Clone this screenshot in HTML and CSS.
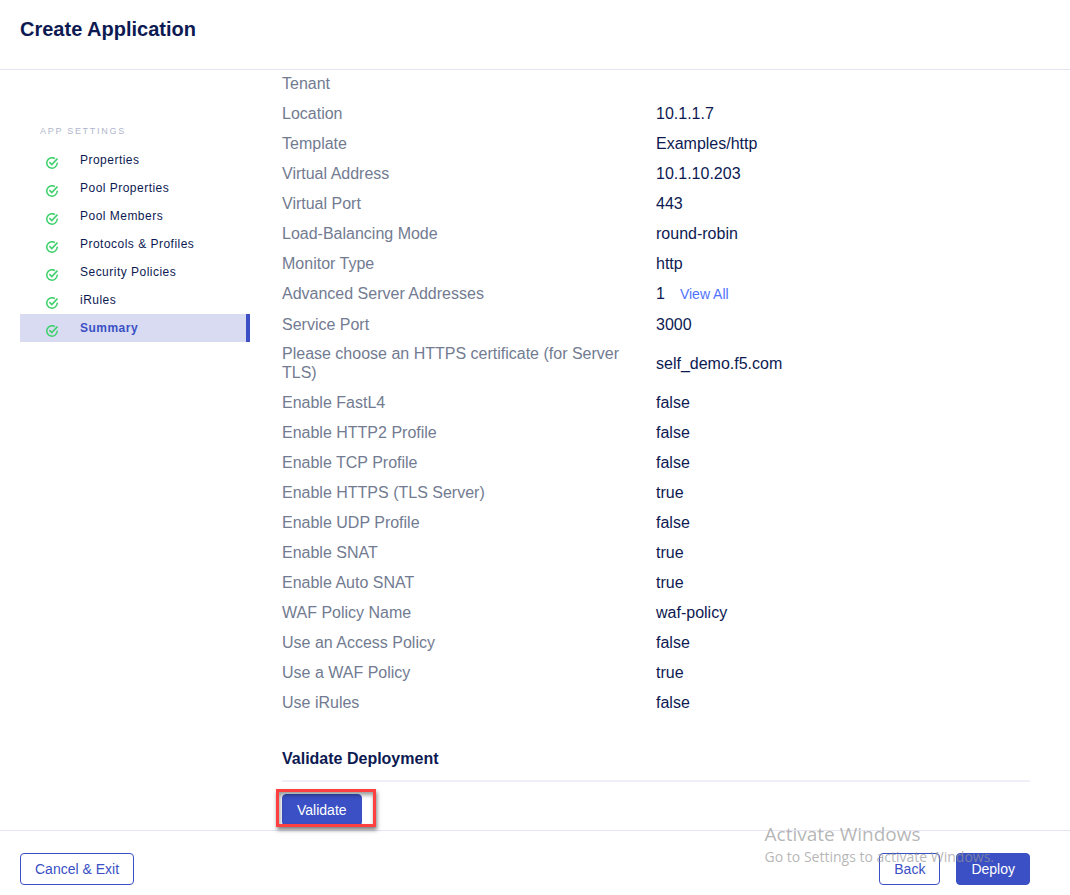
FILE: index.html
```html
<!DOCTYPE html>
<html lang="en">
<head>
<meta charset="utf-8">
<title>Create Application</title>
<link rel="stylesheet" href="styles.css">
</head>
<body>
<svg class="symbols" aria-hidden="true">
  <symbol id="check" viewBox="0 0 12 12">
    <path d="M11.2 5.6A5.2 5.2 0 1 1 8.9 1.6" fill="none" stroke="#3fd06c" stroke-width="1.5"/>
    <path d="M3.4 5.1L5.8 7.5L11.5 1.5" fill="none" stroke="#3fd06c" stroke-width="1.6"/>
  </symbol>
</svg>
<header class="header"><h1 class="title">Create Application</h1></header>
<div class="body">
  <nav class="sidebar" aria-label="App settings">
    <h2 class="nav-title">APP SETTINGS</h2>
    <a class="step" href="#"><svg class="check"><use href="#check"/></svg>Properties</a>
    <a class="step" href="#"><svg class="check"><use href="#check"/></svg>Pool Properties</a>
    <a class="step" href="#"><svg class="check"><use href="#check"/></svg>Pool Members</a>
    <a class="step" href="#"><svg class="check"><use href="#check"/></svg>Protocols &amp; Profiles</a>
    <a class="step" href="#"><svg class="check"><use href="#check"/></svg>Security Policies</a>
    <a class="step" href="#"><svg class="check"><use href="#check"/></svg>iRules</a>
    <a class="step active" href="#" aria-current="step"><svg class="check"><use href="#check"/></svg>Summary</a>
  </nav>
  <main class="content">
    <table class="summary">
      <tr><th scope="row">Tenant</th><td></td></tr>
      <tr><th scope="row">Location</th><td>10.1.1.7</td></tr>
      <tr><th scope="row">Template</th><td>Examples/http</td></tr>
      <tr><th scope="row">Virtual Address</th><td>10.1.10.203</td></tr>
      <tr><th scope="row">Virtual Port</th><td>443</td></tr>
      <tr><th scope="row">Load-Balancing Mode</th><td>round-robin</td></tr>
      <tr><th scope="row">Monitor Type</th><td>http</td></tr>
      <tr class="with-link"><th scope="row">Advanced Server Addresses</th><td>1<a class="view-all" href="#">View All</a></td></tr>
      <tr><th scope="row">Service Port</th><td>3000</td></tr>
      <tr><th scope="row">Please choose an HTTPS certificate (for Server TLS)</th><td>self_demo.f5.com</td></tr>
      <tr><th scope="row">Enable FastL4</th><td>false</td></tr>
      <tr><th scope="row">Enable HTTP2 Profile</th><td>false</td></tr>
      <tr><th scope="row">Enable TCP Profile</th><td>false</td></tr>
      <tr><th scope="row">Enable HTTPS (TLS Server)</th><td>true</td></tr>
      <tr><th scope="row">Enable UDP Profile</th><td>false</td></tr>
      <tr><th scope="row">Enable SNAT</th><td>true</td></tr>
      <tr><th scope="row">Enable Auto SNAT</th><td>true</td></tr>
      <tr><th scope="row">WAF Policy Name</th><td>waf-policy</td></tr>
      <tr><th scope="row">Use an Access Policy</th><td>false</td></tr>
      <tr><th scope="row">Use a WAF Policy</th><td>true</td></tr>
      <tr><th scope="row">Use iRules</th><td>false</td></tr>
    </table>
    <h2 class="section-title">Validate Deployment</h2>
    <div class="validate">
      <button class="btn primary" type="button">Validate</button>
      <span class="highlight"></span>
    </div>
  </main>
</div>
<footer class="footer">
  <button class="btn" type="button">Cancel &amp; Exit</button>
  <div class="actions">
    <button class="btn" type="button">Back</button>
    <button class="btn primary" type="button">Deploy</button>
  </div>
</footer>
<aside class="watermark">
  <p class="watermark-title">Activate Windows</p>
  <p class="watermark-text">Go to Settings to activate Windows.</p>
</aside>
</body>
</html>
```

FILE: styles.css
```css
* { box-sizing: border-box; }

body {
  margin: 0;
  min-height: 100vh;
  display: flex;
  flex-direction: column;
  position: relative;
  background: #fff;
  color: #0d1a52;
  font-family: "Liberation Sans", Arial, sans-serif;
}

.symbols { position: absolute; width: 0; height: 0; }

.header {
  padding: 17px 20px 28px;
  border-bottom: 1px solid #e3e4ef;
}

.title {
  margin: 0;
  font-size: 20px;
  line-height: 24px;
}

.body {
  flex: 1;
  display: flex;
  gap: 32px;
  padding: 0 40px 4px 20px;
}

.sidebar {
  flex: 0 0 230px;
  padding-top: 54px;
}

.nav-title {
  margin: 0 0 8px 20px;
  font-size: 9px;
  font-weight: normal;
  line-height: 14px;
  letter-spacing: 0.19em;
  color: #b0b6cc;
}

.step {
  display: flex;
  align-items: flex-start;
  gap: 22px;
  height: 28px;
  padding: 6px 0 0 26px;
  font-size: 12px;
  line-height: 16px;
  letter-spacing: 0.04em;
  color: #0d1a52;
  text-decoration: none;
}

.step.active {
  background: #d8dbf2;
  border-right: 4px solid #3a50c4;
  color: #3a50c4;
  font-weight: bold;
}

.check {
  width: 12px;
  height: 12px;
  margin-top: 5px;
}

.content { flex: 1; min-width: 0; }

.summary {
  width: 100%;
  margin-top: -2px;
  border-collapse: collapse;
  table-layout: fixed;
  font-size: 16px;
  line-height: 19px;
}

.summary tr { height: 30px; }
.summary .with-link { height: 31px; }

.summary th,
.summary td {
  width: 50%;
  padding: 5px 30px 5px 0;
  text-align: left;
  font-weight: normal;
}

.summary th { color: #727b91; }

.view-all {
  margin-left: 15px;
  font-size: 14px;
  color: #4f73ff;
  text-decoration: none;
}

.section-title {
  margin: 29px 0 12px;
  padding-bottom: 8px;
  border-bottom: 2px solid #eff0f7;
  font-size: 16px;
  line-height: 26px;
}

.validate { position: relative; display: flex; }

.highlight {
  position: absolute;
  top: -5px;
  left: -6px;
  width: 100px;
  height: 38px;
  border: 3px solid #ff4040;
  box-shadow: 1px 3px 4px rgba(0, 0, 0, 0.5), inset 1px 3px 4px rgba(0, 0, 0, 0.4);
  pointer-events: none;
}

.btn {
  height: 32px;
  padding: 0 14px;
  border: 1px solid #3a50c4;
  border-radius: 4px;
  background: #fff;
  color: #3a50c4;
  font-family: inherit;
  font-size: 14px;
  line-height: 16px;
}

.btn.primary { background: #3a50c4; color: #fff; }

.footer {
  display: flex;
  justify-content: space-between;
  padding: 22px 40px 10px 20px;
  border-top: 1px solid #e3e4f4;
}

.actions { display: flex; gap: 16px; }

.watermark {
  position: absolute;
  right: 76px;
  bottom: 28px;
  font-family: "Open Sans", sans-serif;
  color: rgba(150, 150, 150, 0.7);
  pointer-events: none;
}

.watermark p { margin: 0; }
.watermark-title { font-size: 19px; line-height: 26px; }
.watermark-text { font-size: 14px; line-height: 20px; }
```
